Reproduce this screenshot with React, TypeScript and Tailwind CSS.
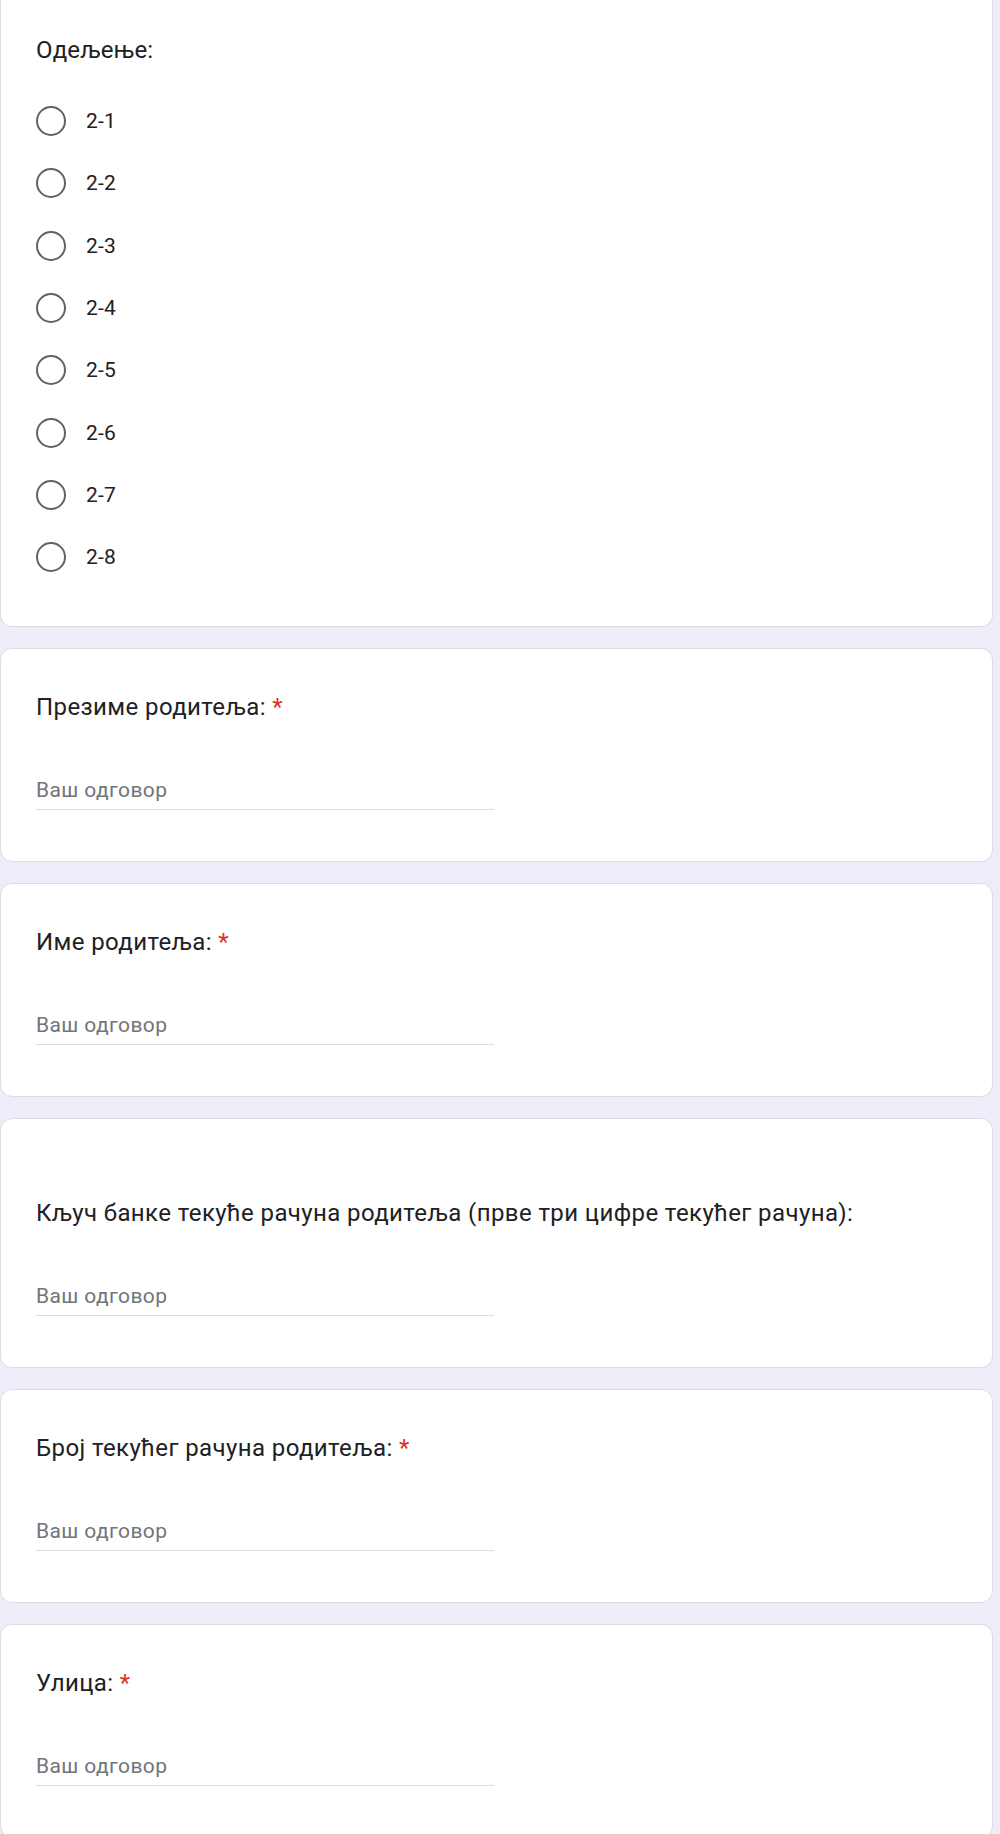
import React from "react";

const options = ["2-1", "2-2", "2-3", "2-4", "2-5", "2-6", "2-7", "2-8"];

function TextQuestion({ title, required, extraTop }: { title: string; required?: boolean; extraTop?: boolean }) {
  return (
    <div
      className={
        "w-[993px] rounded-[12px] border border-[#dadce0] bg-white pl-[35px] pb-[51px] " +
        (extraTop ? "pt-[76px]" : "pt-[40px]")
      }
    >
      <div className="text-[24px] leading-[36px] tracking-[0.4px] text-[#202124]">
        {title}
        {required && <span className="text-[#d93025]"> *</span>}
      </div>
      <div className="mt-[50px] w-[458px] border-b border-[#dadce0] pb-[4px] text-[21px] leading-[30px] tracking-[0.4px] text-[#70757a]">
        Ваш одговор
      </div>
    </div>
  );
}

export default function App() {
  return (
    <div
      className="min-h-[1834px] w-[1000px] bg-[#f0ebf8] pb-[40px]"
      style={{ fontFamily: "Roboto, 'Noto Sans', Arial, sans-serif" }}
    >
      <div className="flex flex-col gap-[21px]">
        <div className="w-[993px] rounded-b-[12px] border border-t-0 border-[#dadce0] bg-white pl-[35px] pt-[32px] pb-[38px]">
          <div className="text-[24px] leading-[36px] tracking-[0.15px] text-[#202124]">Одељење:</div>
          <div className="mt-[22px] flex flex-col">
            {options.map((o) => (
              <div key={o} className="flex h-[62.3px] items-center">
                <span className="h-[30px] w-[30px] shrink-0 rounded-full border-2 border-[#5f6368]" />
                <span className="ml-[20px] text-[21px] leading-[30px] tracking-[0.2px] text-[#202124]">{o}</span>
              </div>
            ))}
          </div>
        </div>
        <TextQuestion title="Презиме родитеља:" required />
        <TextQuestion title="Име родитеља:" required />
        <TextQuestion title="Кључ банке текуће рачуна родитеља (прве три цифре текућег рачуна):" extraTop />
        <TextQuestion title="Број текућег рачуна родитеља:" required />
        <TextQuestion title="Улица:" required />
      </div>
    </div>
  );
}
